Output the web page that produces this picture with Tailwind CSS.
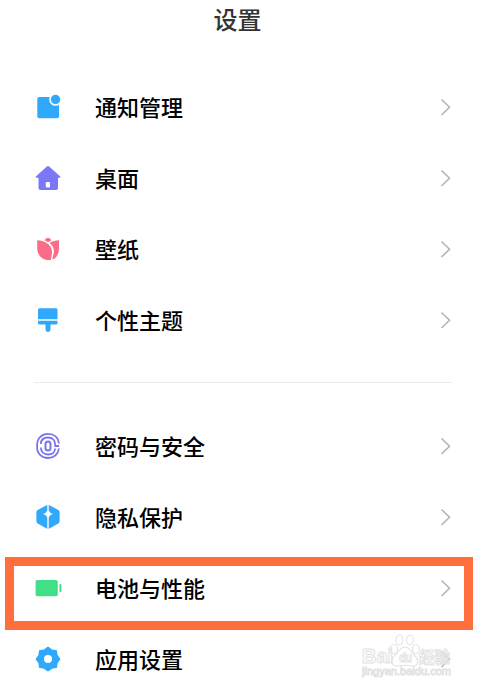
<!DOCTYPE html>
<html lang="zh-CN">
<head>
    <meta charset="UTF-8">
    <meta content="width=device-width, initial-scale=1.0" name="viewport">
    <title>设置</title>
    <script src="https://cdn.jsdelivr.net/npm/@tailwindcss/browser@4"></script>
</head>
<body class="bg-white font-['Noto_Sans_CJK_SC',sans-serif] text-black">
    <div class="relative w-[479px] h-[689px] overflow-hidden">
        <header class="h-[71px] pt-[3px] text-center pr-1">
            <h1 class="text-[24px] leading-8 font-medium text-[#333]">设置</h1>
        </header>

        <ul class="pl-[30px] pr-[27px]">
            <li class="flex items-center h-[71px]">
                <svg class="size-9" viewBox="0 0 36 36">
                    <rect x="7.3" y="8" width="21.7" height="21.3" rx="2" fill="#30a8fc"/>
                    <circle cx="25.5" cy="10.5" r="6.3" fill="#fff"/>
                    <circle cx="25.5" cy="10.5" r="4.7" fill="#30a8fc"/>
                </svg>
                <span class="flex-1 pl-[29px] pb-0.5 text-[22px] leading-8 font-medium">通知管理</span>
                <svg class="w-3 h-5 text-[#b4b4b4]" viewBox="0 0 12 20" fill="none" stroke="currentColor" stroke-width="1.6"><path d="M1.5 2.5 9.5 10.3 1.5 18"/></svg>
            </li>
            <li class="flex items-center h-[71px]">
                <svg class="size-9" viewBox="0 0 36 36">
                    <path d="M16.8 6.6Q18 5.6 19.2 6.6L30.2 16.4Q31 17.8 29.6 17.8H28V28Q28 30 26 30H10.5Q8.5 30 8.5 28V17.8H6.5Q5.1 17.8 5.9 16.4Z" fill="#7b78f8"/>
                    <rect x="15.8" y="22" width="4.2" height="5.5" rx="1.2" fill="#fff"/>
                </svg>
                <span class="flex-1 pl-[29px] pb-0.5 text-[22px] leading-8 font-medium">桌面</span>
                <svg class="w-3 h-5 text-[#b4b4b4]" viewBox="0 0 12 20" fill="none" stroke="currentColor" stroke-width="1.6"><path d="M1.5 2.5 9.5 10.3 1.5 18"/></svg>
            </li>
            <li class="flex items-center h-[71px]">
                <svg class="size-9" viewBox="0 0 36 36" fill="#fc6c88">
                    <path d="M14.4 9.2Q16.5 6.8 18 6.8T21.6 9.2Q19.5 10.1 18.1 11.3Q16.5 10 14.4 9.2Z"/>
                    <path d="M7.2 9.3C14 9.3 21.5 13.5 22 20C22.2 23.5 21 26.500 20.800 29C12.500 29.800 7.200 24.500 7.200 17Z"/>
                    <path d="M29 9.300C25.500 9.400 22.200 10.300 19.500 12.100C23.500 15 24.500 19 23.500 23C23 25.200 22.500 26.800 22.500 28.600C26.800 27 29 22.500 29 17Z"/>
                </svg>
                <span class="flex-1 pl-[29px] pb-0.5 text-[22px] leading-8 font-medium">壁纸</span>
                <svg class="w-3 h-5 text-[#b4b4b4]" viewBox="0 0 12 20" fill="none" stroke="currentColor" stroke-width="1.6"><path d="M1.5 2.5 9.5 10.3 1.5 18"/></svg>
            </li>
            <li class="flex items-center h-[71px]">
                <svg class="size-9" viewBox="0 0 36 36" fill="#30a8fc">
                    <path d="M9.5 6.3H26Q27.500 6.300 27.500 7.800V17.300H8V7.800Q8 6.300 9.500 6.300Z"/>
                    <path d="M8 18.700H27.500V21Q27.500 22.500 26 22.500H20.500V27.500A2.500 2.500 0 0 1 15.500 27.500V22.500H9.500Q8 22.500 8 21Z"/>
                </svg>
                <span class="flex-1 pl-[29px] pb-0.5 text-[22px] leading-8 font-medium">个性主题</span>
                <svg class="w-3 h-5 text-[#b4b4b4]" viewBox="0 0 12 20" fill="none" stroke="currentColor" stroke-width="1.6"><path d="M1.5 2.5 9.5 10.3 1.5 18"/></svg>
            </li>
        </ul>

        <hr class="mt-[27px] mb-[27px] ml-[34px] mr-[27px] border-[#ebebeb]">

        <ul class="pl-[30px] pr-[27px]">
            <li class="flex items-center h-[71px]">
                <svg class="size-9" viewBox="0 0 36 36" fill="none" stroke="#7b74e8" stroke-width="1.8">
                    <path d="M28.9 15.5C28.3 9.5 24 5.900 18 5.900S7.100 10 7.100 17V19C7.100 26 12 30 18 30S28.300 26 28.900 20.500"/>
                    <path d="M10.800 16C11 12 13.800 9.500 18 9.500S25.200 12 25.200 16.500V18H29M25.200 20.500C24.800 24.300 22 26.500 18 26.500S11 24 10.800 19.500"/>
                    <rect x="15.500" y="13.500" width="5" height="9" rx="2.500" stroke-width="2"/>
                </svg>
                <span class="flex-1 pl-[29px] pb-0.5 text-[22px] leading-8 font-medium">密码与安全</span>
                <svg class="w-3 h-5 text-[#b4b4b4]" viewBox="0 0 12 20" fill="none" stroke="currentColor" stroke-width="1.6"><path d="M1.5 2.5 9.5 10.3 1.5 18"/></svg>
            </li>
            <li class="flex items-center h-[71px]">
                <svg class="size-9" viewBox="0 0 36 36">
                    <path d="M16.500 6.200Q18 5.400 19.500 6.200L28.300 11Q29.600 11.700 29.600 13.200V22.300Q29.600 23.800 28.300 24.500L19.500 29.500Q18 30.300 16.500 29.500L7.700 24.500Q6.400 23.800 6.400 22.300V13.200Q6.400 11.700 7.700 11Z" fill="#30a8fc"/>
                    <path d="M17.300 4H18.700V11.300Q19.500 14.100 23 14.900Q19.500 15.700 18.700 18.500V31H17.300V18.500Q16.500 15.700 13 14.900Q16.500 14.100 17.300 11.300Z" fill="#fff"/>
                </svg>
                <span class="flex-1 pl-[29px] pb-0.5 text-[22px] leading-8 font-medium">隐私保护</span>
                <svg class="w-3 h-5 text-[#b4b4b4]" viewBox="0 0 12 20" fill="none" stroke="currentColor" stroke-width="1.6"><path d="M1.5 2.5 9.5 10.3 1.5 18"/></svg>
            </li>
            <li class="flex items-center h-[71px]">
                <svg class="size-9" viewBox="0 0 36 36" fill="#41df87">
                    <rect x="5.6" y="10" width="22.2" height="16.2" rx="1.8"/>
                    <rect x="29.4" y="14" width="2" height="8" rx="0.8"/>
                </svg>
                <span class="flex-1 pl-[29px] pb-0.5 text-[22px] leading-8 font-medium">电池与性能</span>
                <svg class="w-3 h-5 text-[#b4b4b4]" viewBox="0 0 12 20" fill="none" stroke="currentColor" stroke-width="1.6"><path d="M1.5 2.5 9.5 10.3 1.5 18"/></svg>
            </li>
            <li class="flex items-center h-[71px]">
                <svg class="size-9" viewBox="0 0 36 36">
                    <path d="M18 6.500 21.700 9.200 26.200 9.900 26.900 14.400 29.600 18.100 26.900 21.800 26.200 26.300 21.700 27 18 29.700 14.300 27 9.800 26.300 9.100 21.800 6.400 18.100 9.100 14.400 9.800 9.900 14.300 9.200Z" fill="#30a8fc" stroke="#30a8fc" stroke-width="1.600" stroke-linejoin="round"/>
                    <circle cx="18" cy="18.100" r="4" fill="#fff"/>
                </svg>
                <span class="flex-1 pl-[29px] pb-0.5 text-[22px] leading-8 font-medium">应用设置</span>
                <svg class="w-3 h-5 text-[#b4b4b4]" viewBox="0 0 12 20" fill="none" stroke="currentColor" stroke-width="1.6"><path d="M1.5 2.5 9.5 10.3 1.5 18"/></svg>
            </li>
        </ul>

        <!-- highlight box -->
        <div class="absolute left-[5px] top-[557px] w-[468px] h-[73px] border-9 border-[#ff6e3c]"></div>

        <!-- watermark -->
        <svg class="absolute left-[356px] top-[630px] w-[100px] h-[52px]" viewBox="0 0 100 52" fill="#fff" fill-opacity="0.4" stroke="#e2e2e2" stroke-width="1.1" font-family="'Liberation Sans','Noto Sans CJK SC',sans-serif" font-weight="bold">
            <ellipse cx="43.5" cy="10" rx="3.5" ry="5"/>
            <ellipse cx="54" cy="10" rx="3.5" ry="5"/>
            <ellipse cx="38" cy="19" rx="3.500" ry="4.500"/>
            <ellipse cx="60" cy="19" rx="3.500" ry="4.500"/>
            <path d="M49 17C54 17 55 22 58 25C64 30 62 37 56 36Q49 34.500 42 36C35 37 34 30 39 25C43 22 44 17 49 17Z"/>
            <text x="6" y="32.5" font-size="20" textLength="31" lengthAdjust="spacingAndGlyphs" stroke-width="1">Bai</text>
            <text x="43" y="32" font-size="12" textLength="13" stroke-width="0.9">du</text>
            <text x="63" y="32.5" font-size="15.500" textLength="31" stroke-width="1">经验</text>
            <text x="6" y="45" font-size="10.5" textLength="89" lengthAdjust="spacingAndGlyphs" font-weight="normal" stroke-width="0.9">jingyan.baidu.com</text>
        </svg>
    </div>
</body>
</html>
